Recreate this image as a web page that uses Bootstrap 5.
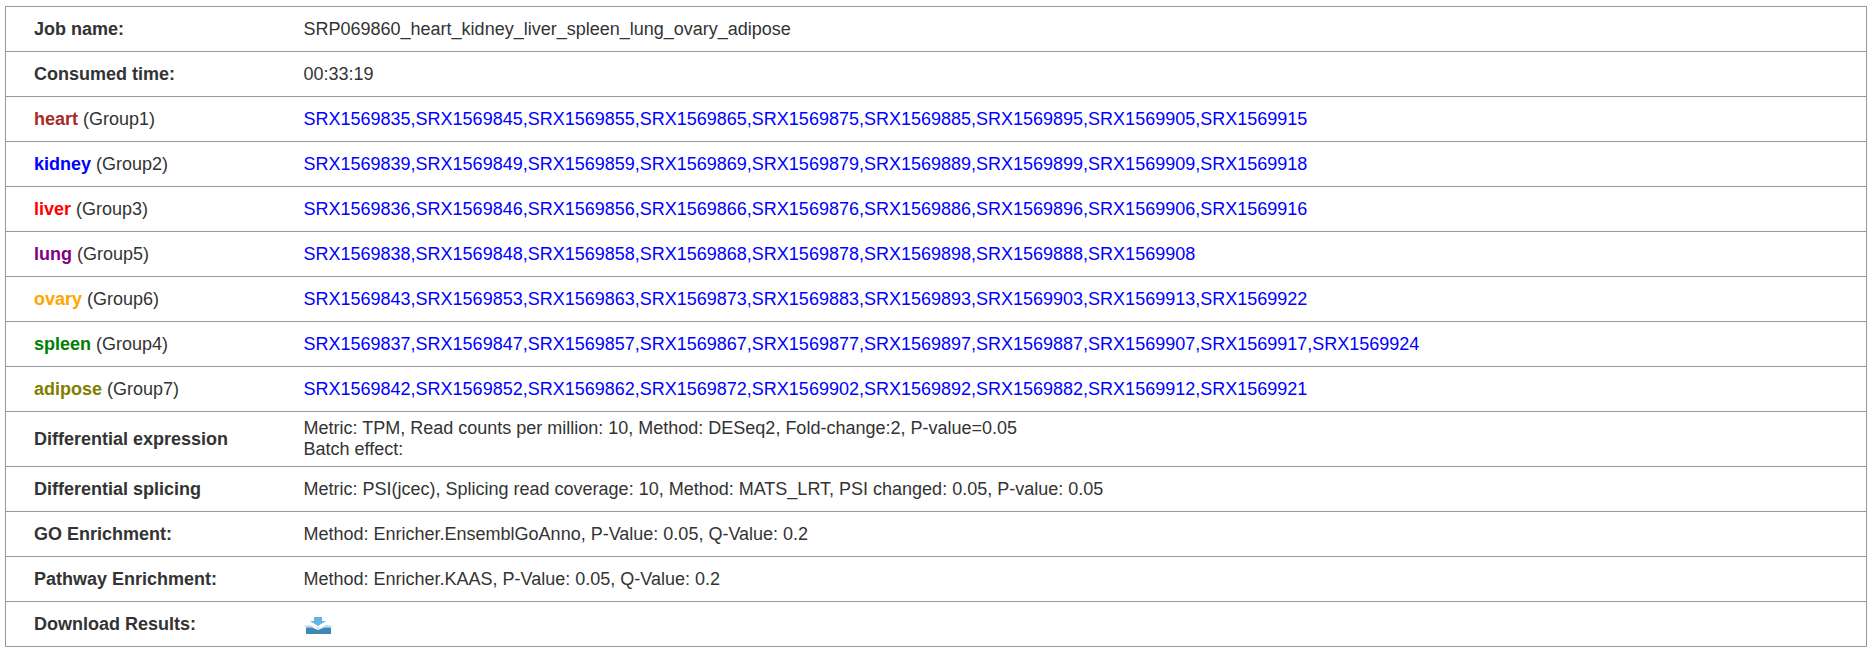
<!DOCTYPE html>
<html lang="en"><head><meta charset="utf-8"><title>Job</title>
<link href="https://cdn.jsdelivr.net/npm/bootstrap@5.3.0/dist/css/bootstrap.min.css" rel="stylesheet">
<style>
body{background:#fff;font-family:"Liberation Sans",Arial,sans-serif;font-size:16px;color:#333}
.job-wrap{padding:6px 4px 0 5px}
.job-table{table-layout:fixed;width:100%;margin:0;border-collapse:collapse;border:1px solid #999;font-size:18px;line-height:21px;color:#333}
.job-table td{padding:6px 29px;border:0;border-top:1px solid #999;vertical-align:middle;height:45px;background:transparent;color:#333}
.job-table td:first-child{padding-left:28px}
.job-table tr:first-child td{border-top:0}
.lab-col{width:269px}
.job-table b{font-weight:700}
.job-table .sx{color:#00f}
.c-heart{color:#a52a2a!important}.c-kidney{color:#00f!important}.c-liver{color:#f00!important}.c-lung{color:purple!important}.c-ovary{color:orange!important}.c-spleen{color:green!important}.c-adipose{color:olive!important}
.dl-ic{display:block;width:31px;height:17px;margin:3px 0 0 -1px}
</style></head><body>
<div class="job-wrap">
<table class="table job-table"><colgroup><col class="lab-col"><col></colgroup><tbody>
<tr><td><b>Job name:</b></td><td>SRP069860_heart_kidney_liver_spleen_lung_ovary_adipose</td></tr>
<tr><td><b>Consumed time:</b></td><td>00:33:19</td></tr>
<tr><td><b class="c-heart">heart</b> (Group1)</td><td class="sx">SRX1569835,SRX1569845,SRX1569855,SRX1569865,SRX1569875,SRX1569885,SRX1569895,SRX1569905,SRX1569915</td></tr>
<tr><td><b class="c-kidney">kidney</b> (Group2)</td><td class="sx">SRX1569839,SRX1569849,SRX1569859,SRX1569869,SRX1569879,SRX1569889,SRX1569899,SRX1569909,SRX1569918</td></tr>
<tr><td><b class="c-liver">liver</b> (Group3)</td><td class="sx">SRX1569836,SRX1569846,SRX1569856,SRX1569866,SRX1569876,SRX1569886,SRX1569896,SRX1569906,SRX1569916</td></tr>
<tr><td><b class="c-lung">lung</b> (Group5)</td><td class="sx">SRX1569838,SRX1569848,SRX1569858,SRX1569868,SRX1569878,SRX1569898,SRX1569888,SRX1569908</td></tr>
<tr><td><b class="c-ovary">ovary</b> (Group6)</td><td class="sx">SRX1569843,SRX1569853,SRX1569863,SRX1569873,SRX1569883,SRX1569893,SRX1569903,SRX1569913,SRX1569922</td></tr>
<tr><td><b class="c-spleen">spleen</b> (Group4)</td><td class="sx">SRX1569837,SRX1569847,SRX1569857,SRX1569867,SRX1569877,SRX1569897,SRX1569887,SRX1569907,SRX1569917,SRX1569924</td></tr>
<tr><td><b class="c-adipose">adipose</b> (Group7)</td><td class="sx">SRX1569842,SRX1569852,SRX1569862,SRX1569872,SRX1569902,SRX1569892,SRX1569882,SRX1569912,SRX1569921</td></tr>
<tr><td><b>Differential expression</b></td><td>Metric: TPM, Read counts per million: 10, Method: DESeq2, Fold-change:2, P-value=0.05<br>Batch effect:</td></tr>
<tr><td><b>Differential splicing</b></td><td>Metric: PSI(jcec), Splicing read coverage: 10, Method: MATS_LRT, PSI changed: 0.05, P-value: 0.05</td></tr>
<tr><td><b>GO Enrichment:</b></td><td>Method: Enricher.EnsemblGoAnno, P-Value: 0.05, Q-Value: 0.2</td></tr>
<tr><td><b>Pathway Enrichment:</b></td><td>Method: Enricher.KAAS, P-Value: 0.05, Q-Value: 0.2</td></tr>
<tr><td><b>Download Results:</b></td><td><svg class="dl-ic" viewBox="0 0 31 17" aria-hidden="true"><path d="M11 0h8v4h4l-8 5-8-5h4z" fill="#62b5e2"/><path d="M0 9l7-1 8 4 8-4 8 1-5 1.500H5z" fill="#c3dcea"/><path d="M3 10.500h6l6 2.500 6-2.500h7V17H3z" fill="#3f87b5"/></svg></td></tr>
</tbody></table>
</div>
</body></html>
